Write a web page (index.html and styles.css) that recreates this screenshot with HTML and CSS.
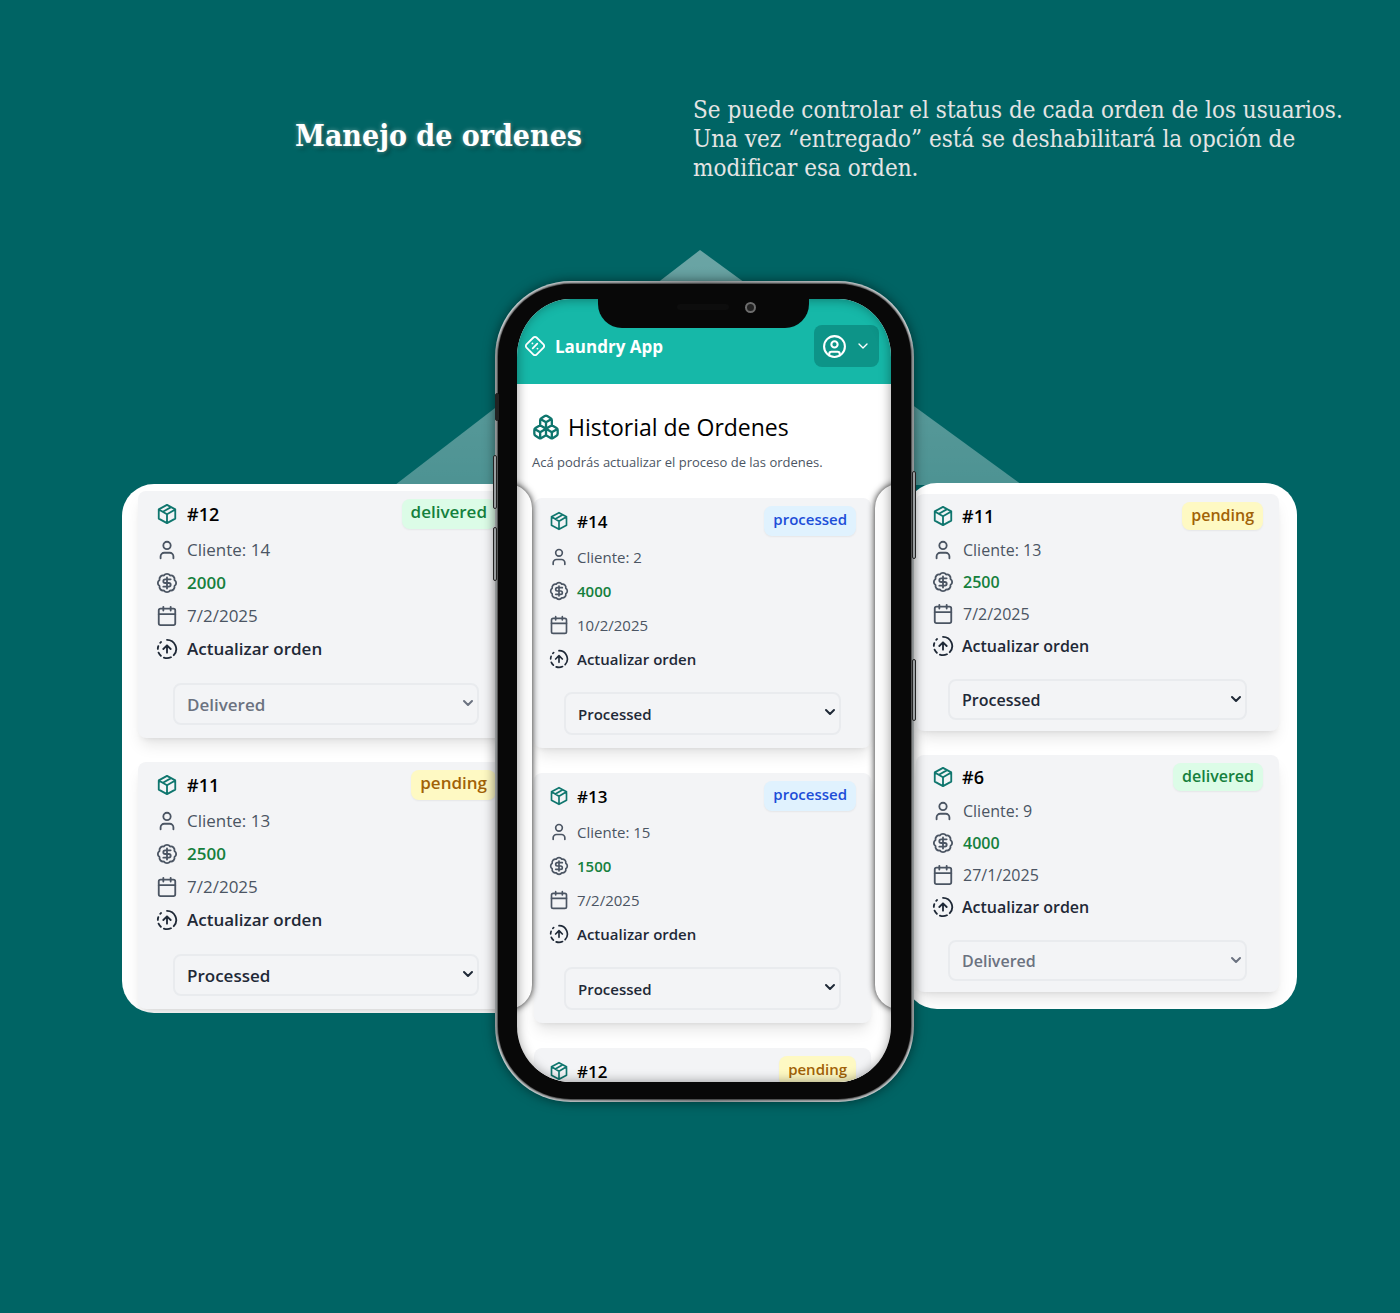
FILE: index.html
```html
<!DOCTYPE html>
<html lang="es">
<head>
<meta charset="utf-8">
<meta name="viewport" content="width=device-width, initial-scale=1">
<title>Manejo de ordenes</title>
<link rel="stylesheet" href="styles.css">
</head>
<body>
<svg class="sprite" aria-hidden="true">
  <symbol id="box" viewBox="0 0 24 24"><path d="M12 2 21 7v10l-9 5-9-5V7ZM12 12.3 21 7M12 12.3V22M12 12.3 3 7M7.500 9.600l9-5.100"/></symbol>
  <symbol id="user" viewBox="0 0 24 24"><path d="M19 21v-2a4 4 0 0 0-4-4H9a4 4 0 0 0-4 4v2"/><circle cx="12" cy="7" r="4"/></symbol>
  <symbol id="price" viewBox="0 0 24 24"><path d="M3.850 8.620a4 4 0 0 1 4.780-4.770 4 4 0 0 1 6.740 0 4 4 0 0 1 4.780 4.780 4 4 0 0 1 0 6.740 4 4 0 0 1-4.770 4.780 4 4 0 0 1-6.750 0 4 4 0 0 1-4.780-4.770 4 4 0 0 1 0-6.760ZM16 8h-6a2 2 0 1 0 0 4h4a2 2 0 1 1 0 4H8M12 18V6"/></symbol>
  <symbol id="date" viewBox="0 0 24 24"><path d="M8 2v4M16 2v4M3 10h18"/><rect width="18" height="18" x="3" y="4" rx="2"/></symbol>
  <symbol id="update" viewBox="0 0 24 24"><path d="M12 2a10 10 0 0 1 7.380 16.750M16 12l-4-4-4 4M12 16V8M2.500 8.875a10 10 0 0 0-.5 3M2.830 16a10 10 0 0 0 2.430 3.400M4.636 5.235a10 10 0 0 1 .891-.857M8.644 21.420a10 10 0 0 0 7.631-.38"/></symbol>
  <symbol id="chevron" viewBox="0 0 24 24"><path d="m6 9 6 6 6-6"/></symbol>
  <symbol id="logo" viewBox="0 0 24 24"><path d="M2.700 10.300a2.410 2.410 0 0 0 0 3.410l7.590 7.590a2.410 2.410 0 0 0 3.410 0l7.590-7.590a2.410 2.410 0 0 0 0-3.410L13.700 2.710a2.410 2.410 0 0 0-3.410 0ZM9.200 9.200h.01M14.500 9.500l-5 5M14.700 14.800h.01"/></symbol>
  <symbol id="account" viewBox="0 0 24 24"><circle cx="12" cy="12" r="10"/><circle cx="12" cy="10" r="3"/><path d="M7 20.660V19a2 2 0 0 1 2-2h6a2 2 0 0 1 2 2v1.660"/></symbol>
  <symbol id="boxes" viewBox="0 0 24 24"><path d="M2.970 12.920A2 2 0 0 0 2 14.630v3.240a2 2 0 0 0 .970 1.710l3 1.800a2 2 0 0 0 2.060 0L12 19v-5.500l-5-3-4.030 2.420ZM7 16.500l-4.740-2.850M7 16.500l5-3M7 16.500v5.170M12 13.500V19l3.970 2.380a2 2 0 0 0 2.060 0l3-1.800a2 2 0 0 0 .970-1.710v-3.240a2 2 0 0 0-.970-1.710L17 10.500l-5 3ZM17 16.500l-5-3M17 16.500l4.740-2.850M17 16.500v5.170M7.970 4.420A2 2 0 0 0 7 6.130v4.370l5 3 5-3V6.130a2 2 0 0 0-.970-1.710l-3-1.800a2 2 0 0 0-2.060 0l-3 1.800ZM12 8 7.260 5.150M12 8l4.740-2.850M12 13.500V8"/></symbol>
</svg>

<header class="intro">
  <h1>Manejo de ordenes</h1>
  <p>Se puede controlar el status de cada orden de los usuarios.<br>Una vez “entregado” está se deshabilitará la opción de<br>modificar esa orden.</p>
</header>

<main class="showcase">
  <section class="panel panel-left" aria-label="Ordenes anteriores">
    <article class="card">
      <div class="head"><svg class="icon box"><use href="#box"/></svg><h3>#12</h3><span class="badge delivered">delivered</span></div>
      <ul class="rows">
        <li><svg class="icon"><use href="#user"/></svg>Cliente: 14</li>
        <li class="price"><svg class="icon"><use href="#price"/></svg>2000</li>
        <li><svg class="icon"><use href="#date"/></svg>7/2/2025</li>
      </ul>
      <label class="update" for="l12"><svg class="icon"><use href="#update"/></svg>Actualizar orden</label>
      <div class="field"><select id="l12" disabled><option>Delivered</option></select><svg class="icon arrow"><use href="#chevron"/></svg></div>
    </article>
    <article class="card">
      <div class="head"><svg class="icon box"><use href="#box"/></svg><h3>#11</h3><span class="badge pending">pending</span></div>
      <ul class="rows">
        <li><svg class="icon"><use href="#user"/></svg>Cliente: 13</li>
        <li class="price"><svg class="icon"><use href="#price"/></svg>2500</li>
        <li><svg class="icon"><use href="#date"/></svg>7/2/2025</li>
      </ul>
      <label class="update" for="l11"><svg class="icon"><use href="#update"/></svg>Actualizar orden</label>
      <div class="field"><select id="l11"><option>Processed</option></select><svg class="icon arrow"><use href="#chevron"/></svg></div>
    </article>
  </section>

  <div class="device">
    <div class="beam"></div>
    <div class="phone">
      <div class="screen">
        <div class="notch"><span class="speaker"></span><span class="camera"></span></div>
        <div class="appbar">
          <svg class="icon"><use href="#logo"/></svg>
          <strong>Laundry App</strong>
          <button type="button" class="account" aria-label="Cuenta"><svg class="icon face"><use href="#account"/></svg><svg class="icon down"><use href="#chevron"/></svg></button>
        </div>
        <div class="title">
          <h2><svg class="icon"><use href="#boxes"/></svg>Historial de Ordenes</h2>
          <p>Acá podrás actualizar el proceso de las ordenes.</p>
        </div>
        <div class="list">
          <article class="card">
            <div class="head"><svg class="icon box"><use href="#box"/></svg><h3>#14</h3><span class="badge processed">processed</span></div>
            <ul class="rows">
              <li><svg class="icon"><use href="#user"/></svg>Cliente: 2</li>
              <li class="price"><svg class="icon"><use href="#price"/></svg>4000</li>
              <li><svg class="icon"><use href="#date"/></svg>10/2/2025</li>
            </ul>
            <label class="update" for="c14"><svg class="icon"><use href="#update"/></svg>Actualizar orden</label>
            <div class="field"><select id="c14"><option>Processed</option></select><svg class="icon arrow"><use href="#chevron"/></svg></div>
          </article>
          <article class="card">
            <div class="head"><svg class="icon box"><use href="#box"/></svg><h3>#13</h3><span class="badge processed">processed</span></div>
            <ul class="rows">
              <li><svg class="icon"><use href="#user"/></svg>Cliente: 15</li>
              <li class="price"><svg class="icon"><use href="#price"/></svg>1500</li>
              <li><svg class="icon"><use href="#date"/></svg>7/2/2025</li>
            </ul>
            <label class="update" for="c13"><svg class="icon"><use href="#update"/></svg>Actualizar orden</label>
            <div class="field"><select id="c13"><option>Processed</option></select><svg class="icon arrow"><use href="#chevron"/></svg></div>
          </article>
          <article class="card">
            <div class="head"><svg class="icon box"><use href="#box"/></svg><h3>#12</h3><span class="badge pending">pending</span></div>
          </article>
        </div>
        <span class="peek peek-left"></span>
        <span class="peek peek-right"></span>
      </div>
    </div>
    <span class="key mute"></span><span class="key up"></span><span class="key down-key"></span>
    <span class="key power"></span><span class="key power low"></span>
  </div>

  <section class="panel panel-right" aria-label="Ordenes siguientes">
    <article class="card">
      <div class="head"><svg class="icon box"><use href="#box"/></svg><h3>#11</h3><span class="badge pending">pending</span></div>
      <ul class="rows">
        <li><svg class="icon"><use href="#user"/></svg>Cliente: 13</li>
        <li class="price"><svg class="icon"><use href="#price"/></svg>2500</li>
        <li><svg class="icon"><use href="#date"/></svg>7/2/2025</li>
      </ul>
      <label class="update" for="r11"><svg class="icon"><use href="#update"/></svg>Actualizar orden</label>
      <div class="field"><select id="r11"><option>Processed</option></select><svg class="icon arrow"><use href="#chevron"/></svg></div>
    </article>
    <article class="card">
      <div class="head"><svg class="icon box"><use href="#box"/></svg><h3>#6</h3><span class="badge delivered">delivered</span></div>
      <ul class="rows">
        <li><svg class="icon"><use href="#user"/></svg>Cliente: 9</li>
        <li class="price"><svg class="icon"><use href="#price"/></svg>4000</li>
        <li><svg class="icon"><use href="#date"/></svg>27/1/2025</li>
      </ul>
      <label class="update" for="r6"><svg class="icon"><use href="#update"/></svg>Actualizar orden</label>
      <div class="field"><select id="r6" disabled><option>Delivered</option></select><svg class="icon arrow"><use href="#chevron"/></svg></div>
    </article>
  </section>
</main>
</body>
</html>
```
FILE: styles.css
```css
* { box-sizing: border-box; }

body {
  margin: 0;
  min-height: 100vh;
  background: #006464;
  color: #4b5563;
  font-family: "Open Sans", "Noto Sans", sans-serif;
}

h1, h2, h3, p, ul { margin: 0; padding: 0; }
ul { list-style: none; }

.sprite { position: absolute; width: 0; height: 0; }

.icon {
  flex: none;
  width: 22px;
  height: 22px;
  fill: none;
  stroke: currentColor;
  stroke-width: 2;
  stroke-linecap: round;
  stroke-linejoin: round;
}

/* Intro */
.intro {
  display: grid;
  grid-template-columns: 398fr 707fr;
  align-items: start;
  padding: 96px 0 0 295px;
  font-family: "DejaVu Serif Condensed", "DejaVu Serif", serif;
}
.intro h1 {
  color: #fff;
  font-size: 30px;
  line-height: 80px;
  white-space: nowrap;
  text-shadow: 0 0 4px rgba(255, 255, 255, .4), 3px 3px 4px rgba(0, 0, 0, .3);
}
.intro p {
  color: #e4e4e4;
  font-size: 24px;
  line-height: 29px;
  white-space: nowrap;
}

/* Composition: two panels tucked behind the phone */
.showcase {
  display: grid;
  grid-template-columns: minmax(0, 373fr) 419px minmax(0, 383fr);
  align-items: start;
  padding: 98px 103px 100px 122px;
  isolation: isolate;
}

.panel {
  display: flex;
  flex-direction: column;
  gap: 24px;
  overflow: hidden;
  border-radius: 32px;
  background: #fff;
}
.panel-left {
  --side: 18px; --head: 30px; --row: 33px; --above: 18px; --field: 42px; --below: 13px; --inset: 17px;
  margin: 203px -36px 0 0;
  padding: 7px 17px 4px 16px;
  font-size: 17px;
}
.panel-right {
  --side: 16px; --head: 28px; --row: 32px; --above: 17px; --field: 41px; --below: 11px; --inset: 16px;
  margin: 202px 0 0 -9px;
  padding: 11px 18px 17px 11px;
  font-size: 16px;
}
.panel-right .head, .panel-right li, .panel-right .update { gap: 8px; }

/* Order card */
.card {
  padding: 8px var(--side) var(--below);
  border-radius: 8px;
  background: #f3f4f6;
  box-shadow: 0 10px 15px -3px rgba(0, 0, 0, .1), 0 4px 6px -4px rgba(0, 0, 0, .1);
}
.head {
  display: flex;
  align-items: center;
  gap: 9px;
  height: var(--head);
  margin-bottom: 4px;
}
.head h3 { color: #000; font-size: 18px; font-weight: 600; }
.box { color: #0f766e; }
.badge {
  height: 100%;
  margin-left: auto;
  padding: 0 9px;
  border-radius: 8px;
  font-weight: 600;
  line-height: 26px;
  box-shadow: 0 1px 2px rgba(0, 0, 0, .06);
}
.delivered { background: #dcfce7; color: #15803d; }
.pending { background: #fef9c3; color: #a16207; }
.processed { background: #e0f2fe; color: #1d4ed8; }
.rows li, .update {
  display: flex;
  align-items: center;
  gap: 9px;
  height: var(--row);
}
.price { color: #15803d; font-weight: 600; }
.price .icon { color: #4b5563; }
.update { color: #1f2937; font-weight: 600; }
.field {
  position: relative;
  margin: var(--above) var(--inset) 0;
}
.field select {
  display: block;
  width: 100%;
  height: var(--field);
  padding: 0 12px;
  appearance: none;
  border: 2px solid #e9ebee;
  border-radius: 8px;
  background: #f3f4f6;
  color: #1f2937;
  font: inherit;
  font-weight: 600;
  opacity: 1;
}
.field select:disabled, .field select:disabled + .arrow { color: #6b7280; }
.arrow {
  position: absolute;
  top: 12px;
  right: 3px;
  width: 16px;
  height: 16px;
  color: #1f2937;
  stroke-width: 3;
  pointer-events: none;
}

/* Phone */
.device { position: relative; z-index: 1; }
.beam {
  position: absolute;
  z-index: -2;
  top: -31px;
  left: -100px;
  width: 627px;
  height: 235px;
  background: linear-gradient(rgba(255, 255, 255, .42), rgba(255, 255, 255, .3));
  clip-path: polygon(305px 0, 100% 100%, 0 100%);
}
.phone {
  padding: 3px;
  border-radius: 76px;
  background: linear-gradient(90deg, #8f9496, #cfd3d5 1%, #8f9496 50%, #cfd3d5 99%, #8f9496);
  box-shadow: 0 0 12px rgba(0, 0, 0, .5);
}
.screen {
  position: relative;
  overflow: hidden;
  height: 815px;
  border: solid #080808;
  border-width: 15px 20px 17px 19px;
  border-radius: 73px;
  background: #fff;
  box-shadow: 0 0 2px 1px #333;
}
.screen::after {
  content: "";
  position: absolute;
  inset: 0;
  border-radius: 52px;
  box-shadow: inset 0 0 12px rgba(0, 0, 0, .4);
  pointer-events: none;
}
.notch {
  position: absolute;
  z-index: 2;
  top: -1px;
  left: 81px;
  display: flex;
  justify-content: flex-end;
  gap: 16px;
  width: 211px;
  height: 30px;
  padding: 4px 53px 0 0;
  border-radius: 0 0 24px 24px;
  background: #080808;
}
.speaker { width: 52px; height: 6px; margin-top: 2px; border-radius: 3px; background: #0d0d0d; }
.camera { width: 11px; height: 11px; border: 2px solid #6d6d6d; border-radius: 50%; background: #222; }
.appbar {
  display: flex;
  align-items: center;
  gap: 9px;
  height: 85px;
  padding: 9px 12px 0 7px;
  background: #16b8a8;
  color: #fff;
  font-size: 18px;
}
.appbar strong { font-size: 17px; }
.account {
  display: flex;
  align-items: center;
  gap: 8px;
  height: 42px;
  margin-left: auto;
  padding: 0 8px;
  border: 0;
  border-radius: 8px;
  background: #0d9488;
  color: #fff;
}
.account .face { width: 25px; height: 25px; }
.account .down { width: 16px; height: 16px; }
.title { padding: 26px 15px 0; }
.title h2 {
  display: flex;
  align-items: center;
  gap: 8px;
  color: #000;
  font-size: 23px;
  font-weight: 500;
  line-height: 34px;
}
.title h2 .icon { width: 28px; height: 28px; color: #0f766e; }
.title p { margin-top: 8px; font-size: 13px; line-height: 20px; }
.list {
  --side: 15px; --head: 30px; --row: 34px; --above: 16px; --field: 43px; --below: 13px; --inset: 15px;
  display: flex;
  flex-direction: column;
  gap: 25px;
  padding: 26px 20px 0 17px;
  font-size: 15px;
}
.list .icon:not(.arrow) { width: 20px; height: 20px; }
.list .head, .list li, .list .update { gap: 8px; }
.list h3 { font-size: 17px; }
.peek {
  position: absolute;
  top: 185px;
  width: 48px;
  height: 525px;
  border-radius: 24px;
  background: #fcfcfc;
  box-shadow: 0 0 7px rgba(0, 0, 0, .9);
}
.peek-left { left: -33px; }
.peek-right { right: -32px; }
.key {
  position: absolute;
  left: -2px;
  width: 4px;
  border: 1px solid #222;
  border-radius: 2px;
  background: #9a9ea0;
}
.mute { top: 112px; height: 28px; left: 0; background: #222; }
.up { top: 174px; height: 54px; }
.down-key { top: 246px; height: 54px; }
.power { left: auto; right: -2px; top: 190px; height: 88px; }
.low { top: 378px; height: 62px; }
```
